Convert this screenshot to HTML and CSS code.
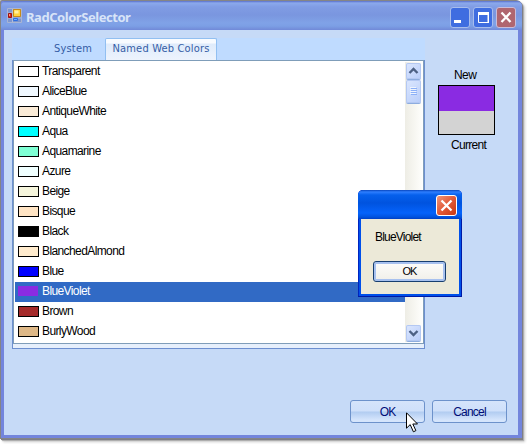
FILE: index.html
```html
<!DOCTYPE html>
<html lang="en">
<head>
<meta charset="utf-8">
<title>RadColorSelector</title>
<link rel="stylesheet" href="styles.css">
</head>
<body>
<div class="window">
  <header class="titlebar">
    <svg class="app-icon" width="15" height="15" viewBox="0 0 15 15">
      <path d="M.5.5h14v14H.5z" fill="#7e96cf" stroke="#a9b5d2"/>
      <path d="M5.500 1v13M1 5h5M1 10h13" stroke="#b2bdd8"/>
      <path d="M6.500 1.500h7v7h-7z" fill="#ffd33d" stroke="#c78a18"/><path d="M7.500 2.500h4v3h-4z" fill="#fff0a0"/>
      <path d="M1.500 5.500h3v4h-3z" fill="#d62c20" stroke="#a01010"/><path d="M2 6h1v2H2z" fill="#ff9478"/>
      <path d="M6.500 10.500h4v2h-4z" fill="#70b0ff" stroke="#2e6ee0"/>
    </svg>
    <h1>RadColorSelector</h1>
    <div class="controls">
      <svg width="20" height="21" viewBox="0 0 20 21"><rect class="ctl" x=".5" y=".5" width="19" height="20" rx="2.500"/><path d="M4 13h7v3H4z" fill="#fff"/></svg>
      <svg width="20" height="21" viewBox="0 0 20 21"><rect class="ctl" x=".5" y=".5" width="19" height="20" rx="2.500"/><path d="M5.500 6v9.500h9.500V6" fill="none" stroke="#fff"/><path d="M5 5h11v3H5zM15 8h1v8h-1z" fill="#fff"/></svg>
      <svg width="20" height="21" viewBox="0 0 20 21"><rect class="ctl close" x=".5" y=".5" width="19" height="20" rx="2.500"/><path d="M5.500 5.500l9 9.500M14.500 5.500l-9 9.500" stroke="#fff" stroke-width="2.300"/></svg>
    </div>
  </header>
  <main class="client">
    <div class="upper">
      <section class="tabs">
        <nav class="strip"><span class="tab">System</span><span class="tab active">Named Web Colors</span></nav>
        <div class="panel">
          <div class="list">
            <ul class="items">
              <li><i class="c-transparent"></i><span>Transparent</span></li>
              <li><i class="c-aliceblue"></i><span>AliceBlue</span></li>
              <li><i class="c-antiquewhite"></i><span>AntiqueWhite</span></li>
              <li><i class="c-aqua"></i><span>Aqua</span></li>
              <li><i class="c-aquamarine"></i><span>Aquamarine</span></li>
              <li><i class="c-azure"></i><span>Azure</span></li>
              <li><i class="c-beige"></i><span>Beige</span></li>
              <li><i class="c-bisque"></i><span>Bisque</span></li>
              <li><i class="c-black"></i><span>Black</span></li>
              <li><i class="c-blanchedalmond"></i><span>BlanchedAlmond</span></li>
              <li><i class="c-blue"></i><span>Blue</span></li>
              <li class="selected"><i class="c-blueviolet"></i><span>BlueViolet</span></li>
              <li><i class="c-brown"></i><span>Brown</span></li>
              <li><i class="c-burlywood"></i><span>BurlyWood</span></li>
            </ul>
            <div class="scrollbar">
              <svg class="arrow up" width="15" height="16" viewBox="0 0 15 16"><path d="M3.500 10L7.500 6l4 4" fill="none" stroke="#4d6185" stroke-width="2.400"/></svg>
              <svg class="thumb" width="15" height="23" viewBox="0 0 15 23"><path d="M4 7.500h6M4 9.500h6M4 11.500h6M4 13.500h6" stroke="#eef4fe"/><path d="M5 8.500h6M5 10.500h6M5 12.500h6M5 14.500h6" stroke="#8cb0f8"/></svg>
              <svg class="arrow down" width="15" height="16" viewBox="0 0 15 16"><path d="M3.500 6l4 4 4-4" fill="none" stroke="#4d6185" stroke-width="2.400"/></svg>
            </div>
          </div>
        </div>
      </section>
      <aside class="preview"><span class="new-label">New</span><div class="sample"></div><span class="current-label">Current</span></aside>
    </div>
    <footer class="actions"><button>OK</button><button>Cancel</button></footer>
  </main>
</div>
<div class="dialog">
  <div class="dialog-title"><svg width="21" height="21" viewBox="0 0 21 21"><defs><linearGradient id="r" x2="1" y2="1"><stop stop-color="#f0987c"/><stop offset=".5" stop-color="#e25a38"/><stop offset="1" stop-color="#c73510"/></linearGradient></defs><rect x=".5" y=".5" width="20" height="20" rx="2.500" fill="url(#r)" stroke="#fff"/><path d="M5.500 5.500l10 10M15.500 5.500l-10 10" stroke="#fff" stroke-width="2.300"/></svg></div>
  <div class="dialog-body"><p>BlueViolet</p><button>OK</button></div>
</div>
<svg class="cursor" width="12" height="21" viewBox="0 0 12 21"><path d="M.5.8v15.400l3.700-3.600 3.200 7.200 2.500-1.200L6.800 12h4.700z" fill="#fff" stroke="#000"/></svg>
</body>
</html>
```
FILE: styles.css
```css
* { box-sizing: border-box; }
body {
  margin: 0;
  width: 527px;
  height: 444px;
  overflow: hidden;
  background: #fff;
  font: 12px/20px "Liberation Sans", sans-serif;
  color: #000;
}
.window {
  width: 522px;
  height: 439px;
  border: 1px solid #858585;
  border-right: 0;
  border-radius: 2px 6px 0 0;
  padding: 0 4px 4px 3px;
  background: #7385dc;
  box-shadow: 1px 1px 0 #7f7f86, 2px 2px 1px #aaa, 3px 3px 3px #ccc;
}
.titlebar {
  height: 29px;
  margin: 0 -4px 0 -3px;
  padding: 1px 6px 0 6px;
  display: flex;
  align-items: center;
  border-radius: 5px 5px 0 0;
  background: linear-gradient(#5970cc 0, #8ba9ec 2px, #809ce4 6px, #7a96df 14px, #80a2e7 22px, #7c9fe5 25px, #7189d8 29px);
}
.app-icon { margin-top: -1px; }
h1 {
  margin: 2px 0 0 4px;
  flex: 1;
  font: bold 13px/20px "Noto Sans", sans-serif;
  letter-spacing: -0.45px;
  color: #d8e4f8;
  white-space: nowrap;
}
.controls { display: flex; gap: 3px; margin-top: 2px; }
.ctl { fill: #3f6de0; stroke: #a8bdec; }
.ctl.close { fill: #b0666f; stroke: #c8bcd9; }
.client { height: 405px; padding: 8px; background: #c6daf7; }
.upper { display: flex; height: 311px; }
.tabs { width: 413px; }
.strip { display: flex; height: 22px; padding-left: 29px; background: #bfdbff; }
.tab {
  width: 64px;
  text-align: center;
  font: 11px/22px "DejaVu Sans Condensed", "DejaVu Sans", sans-serif;
  letter-spacing: 0.17px;
  color: #355da5;
}
.tab.active {
  width: 112px;
  height: 22px;
  border: 1px solid #91bff1;
  border-bottom: 0;
  border-radius: 2px 2px 0 0;
  background: linear-gradient(#f8fbff 0, #f8fbff 4px, #dfebfb 5px, #edf3fd);
  line-height: 20px;
}
.panel { height: 289px; border: 1px solid #6d8fd0; border-top: 0; padding-bottom: 4px; background: #e6effc; }
.list { display: flex; height: 284px; border: 1px solid #7f9db9; background: #fff; padding: 1px; }
.items { list-style: none; margin: 0; padding: 0; width: 390px; height: 281px; }
.items li { height: 20px; padding: 4px 0 0 3px; display: flex; align-items: flex-start; }
.items i { width: 21px; height: 11px; border: 1px solid #000; margin-right: 3px; }
.items span { line-height: 18px; height: 18px; margin-top: -4px; letter-spacing: -0.6px; }
.selected { background: #316ac5; color: #fff; }
.items .selected i { border: 0; width: 20px; height: 10px; margin-right: 4px; }
.c-transparent { background: #fff; }
.c-aliceblue { background: aliceblue; }
.c-antiquewhite { background: antiquewhite; }
.c-aqua { background: aqua; }
.c-aquamarine { background: aquamarine; }
.c-azure { background: azure; }
.c-beige { background: beige; }
.c-bisque { background: bisque; }
.c-black { background: black; }
.c-blanchedalmond { background: blanchedalmond; }
.c-blue { background: blue; }
.c-blueviolet { background: blueviolet; }
.c-brown { background: brown; }
.c-burlywood { background: burlywood; }
.scrollbar {
  width: 17px;
  display: flex;
  flex-direction: column;
  align-items: center;
  background: linear-gradient(90deg, #eeede5, #fefefb);
}
.arrow, .thumb {
  flex: none;
  border-radius: 2px;
  background: linear-gradient(135deg, #dce7fe, #b8cdfa);
  box-shadow: inset 0 0 0 1px #b4c8f2, 0 1px 0 #8eaddf;
}
.arrow.up { margin-top: 1px; }
.thumb { margin-top: 1px; }
.arrow.down { margin-top: auto; margin-bottom: 1px; }
.preview { flex: 1; padding-top: 27px; display: flex; flex-direction: column; }
.preview span { letter-spacing: -0.6px; }
.preview .current-label { letter-spacing: -0.7px; }
.new-label { margin-left: 29px; }
.sample {
  width: 57px;
  height: 50px;
  margin-left: 13px;
  border: 1px solid #000;
  background: linear-gradient(#8a2be2 25px, #d3d3d3 25px);
}
.current-label { margin-left: 26px; }
.actions { display: flex; justify-content: flex-end; gap: 7px; margin: 51px 3px 0 0; }
.actions button {
  width: 75px;
  height: 23px;
  padding: 0;
  border: 1px solid #6d92cb;
  border-radius: 3px;
  background: linear-gradient(#d5e4fb 0, #cfe0fa 10px, #b1ccf1 11px, #d5e5fc 19px);
  font: 12px/20px "Liberation Sans", sans-serif;
  letter-spacing: -0.8px;
  color: #000d77;
}
.dialog {
  position: absolute;
  left: 358px;
  top: 190px;
  width: 104px;
  height: 107px;
  padding: 0 3px 3px;
  border-radius: 5px 5px 0 0;
  background: #0050ea;
  box-shadow: inset -1px -1px 0 #0019a5, inset 1px 0 0 #0024c0;
}
.dialog-title {
  height: 29px;
  margin: 0 -3px;
  padding: 5px 5px 0 0;
  border-radius: 5px 5px 0 0;
  display: flex;
  justify-content: flex-end;
  background: linear-gradient(#0845bd 0, #2d7eff 2px, #0560ec 5px, #0053df 13px, #0563fb 23px, #0053df 27px, #003fc4 29px);
}
.dialog-body { height: 75px; background: #ece9d8; padding: 8px 12px; }
.dialog p { margin: 0 0 14px 2px; letter-spacing: -0.8px; }
.dialog button {
  display: block;
  width: 73px;
  height: 21px;
  padding: 0;
  border: 1px solid #173e70;
  border-radius: 3px;
  background: linear-gradient(#fdfdfb, #f0efe9);
  box-shadow: inset 0 0 0 2px #a7c1ef;
  font: 11px/19px "Liberation Sans", sans-serif;
  letter-spacing: -1px;
}
.cursor { position: absolute; left: 406px; top: 412px; }
```
